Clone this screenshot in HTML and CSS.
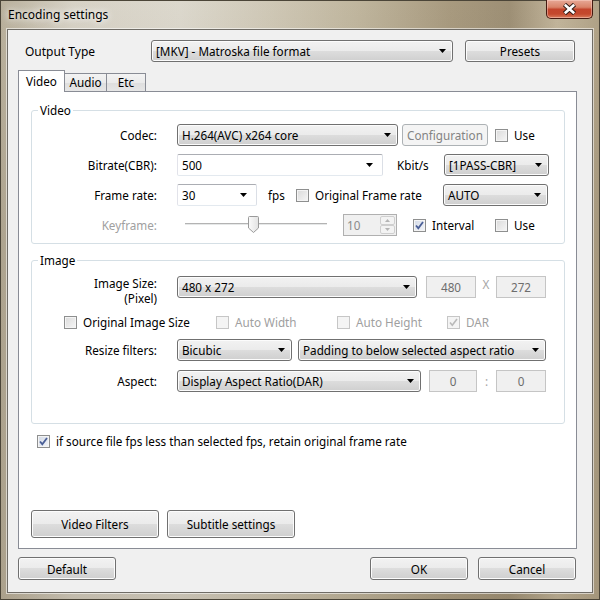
FILE: index.html
```html
<!DOCTYPE html>
<html>
<head>
<meta charset="utf-8">
<title>Encoding settings</title>
<link rel="stylesheet" href="styles.css">
</head>
<body>
<div class="window">
  <div class="titlebar">
    <span class="title">Encoding settings</span>
    <div class="close">
      <svg width="15" height="12" viewBox="0 0 15 12"><path d="M2.5 1.5L12.5 10.5M12.5 1.5L2.5 10.5" stroke="#2e1b16" stroke-width="4.6"/><path d="M2.8 1.8L12.2 10.2M12.2 1.8L2.8 10.2" stroke="#fff" stroke-width="2.6"/></svg>
    </div>
  </div>
  <div class="client">
    <div class="output-row">
      <span class="output-label">Output Type</span>
      <div class="combo w-output"><span>[MKV] - Matroska file format</span><svg class="arr" width="7" height="4"><path d="M0 0h7L3.5 4z"/></svg></div>
      <button class="btn btn-presets">Presets</button>
    </div>

    <div class="tabs">
      <div class="tab active">Video</div>
      <div class="tab t-audio">Audio</div>
      <div class="tab t-etc">Etc</div>
    </div>

    <div class="panel">
      <fieldset class="group">
        <legend>Video</legend>
        <div class="gbody vbody">
          <div class="row">
            <span class="rl">Codec:</span>
            <div class="combo w-codec"><span>H.264(AVC) x264 core</span><svg class="arr" width="7" height="4"><path d="M0 0h7L3.5 4z"/></svg></div>
            <button class="btn disabled btn-config">Configuration</button>
            <span class="cb"><span class="box"></span>Use</span>
          </div>
          <div class="row">
            <span class="rl">Bitrate(CBR):</span>
            <div class="combo edit w-bitrate"><span>500</span><svg class="arr" width="7" height="4"><path d="M0 0h7L3.5 4z"/></svg></div>
            <span class="unit u-kbit">Kbit/s</span>
            <div class="combo w-mode"><span>[1PASS-CBR]</span><svg class="arr" width="7" height="4"><path d="M0 0h7L3.5 4z"/></svg></div>
          </div>
          <div class="row">
            <span class="rl">Frame rate:</span>
            <div class="combo edit w-fps"><span>30</span><svg class="arr" width="7" height="4"><path d="M0 0h7L3.5 4z"/></svg></div>
            <span class="unit u-fps">fps</span>
            <span class="cb w-orig"><span class="box"></span>Original Frame rate</span>
            <div class="combo w-mode"><span>AUTO</span><svg class="arr" width="7" height="4"><path d="M0 0h7L3.5 4z"/></svg></div>
          </div>
          <div class="row">
            <span class="rl dis">Keyframe:</span>
            <div class="slider">
              <svg class="thumb" width="11" height="17" viewBox="0 0 11 17">
                <defs><linearGradient id="tg" x1="0" y1="0" x2="1" y2="0"><stop offset="0" stop-color="#fbfbfb"/><stop offset="1" stop-color="#e2e2e2"/></linearGradient></defs>
                <path d="M0.5 1.5Q0.5 0.5 1.5 0.5h8Q10.5 0.5 10.5 1.5v10.5l-5 4.5l-5-4.5z" fill="url(#tg)" stroke="#9a9a9a"/>
              </svg>
            </div>
            <div class="spin">
              <span class="spin-val">10</span>
              <span class="spin-btns">
                <span class="sb"><svg width="5" height="3"><path d="M0 3h5L2.5 0z" fill="#b4b4b4"/></svg></span>
                <span class="sb"><svg width="5" height="3"><path d="M0 0h5L2.5 3z" fill="#b4b4b4"/></svg></span>
              </span>
            </div>
            <span class="cb w-interval"><span class="box checked"><svg width="11" height="11" viewBox="0 0 11 11"><path d="M2 5.5L4.3 8.2L9 2" fill="none" stroke="#4a5f97" stroke-width="1.8"/></svg></span>Interval</span>
            <span class="cb"><span class="box"></span>Use</span>
          </div>
        </div>
      </fieldset>

      <fieldset class="group g-image">
        <legend>Image</legend>
        <div class="gbody ibody">
          <div class="row r-size">
            <span class="rl two"><span class="ln">Image Size:</span><span class="ln">(Pixel)</span></span>
            <div class="combo w-size"><span>480 x 272</span><svg class="arr" width="7" height="4"><path d="M0 0h7L3.5 4z"/></svg></div>
            <div class="tb tb-w">480</div>
            <span class="sep">X</span>
            <div class="tb">272</div>
          </div>
          <div class="row r-checks">
            <span class="cb c-orig"><span class="box"></span>Original Image Size</span>
            <span class="cb dis c-aw"><span class="box"></span>Auto Width</span>
            <span class="cb dis c-ah"><span class="box"></span>Auto Height</span>
            <span class="cb dis"><span class="box"><svg width="11" height="11" viewBox="0 0 11 11"><path d="M2 5.5L4.3 8.2L9 2" fill="none" stroke="#b9b9b9" stroke-width="1.6"/></svg></span>DAR</span>
          </div>
          <div class="row r-resize">
            <span class="rl">Resize filters:</span>
            <div class="combo w-filter"><span>Bicubic</span><svg class="arr" width="7" height="4"><path d="M0 0h7L3.5 4z"/></svg></div>
            <div class="combo w-pad"><span>Padding to below selected aspect ratio</span><svg class="arr" width="7" height="4"><path d="M0 0h7L3.5 4z"/></svg></div>
          </div>
          <div class="row r-aspect">
            <span class="rl">Aspect:</span>
            <div class="combo w-aspect"><span>Display Aspect Ratio(DAR)</span><svg class="arr" width="7" height="4"><path d="M0 0h7L3.5 4z"/></svg></div>
            <div class="tb tb-a">0</div>
            <span class="sep s-colon">:</span>
            <div class="tb">0</div>
          </div>
        </div>
      </fieldset>

      <div class="row r-retain">
        <span class="cb"><span class="box checked"><svg width="11" height="11" viewBox="0 0 11 11"><path d="M2 5.5L4.3 8.2L9 2" fill="none" stroke="#4a5f97" stroke-width="1.8"/></svg></span>if source file fps less than selected fps, retain original frame rate</span>
      </div>

      <div class="row r-panelbtns">
        <button class="btn btn-wide">Video Filters</button>
        <button class="btn btn-wide">Subtitle settings</button>
      </div>
    </div>

    <div class="footer">
      <button class="btn btn-foot">Default</button>
      <button class="btn btn-foot btn-ok">OK</button>
      <button class="btn btn-foot btn-cancel">Cancel</button>
    </div>
  </div>
</div>
</body>
</html>
```
FILE: styles.css
```css
* { box-sizing: border-box; }
html, body { margin: 0; padding: 0; }
body {
  width: 600px; height: 600px; overflow: hidden;
  font-family: "Noto Sans", "Segoe UI", sans-serif;
  font-size: 11.7px; color: #000;
}
.window {
  width: 600px; height: 600px;
  border: 1px solid #4b4538;
  display: flex; flex-direction: column;
  background:
    linear-gradient(180deg, rgba(255,255,255,0) 0%, rgba(120,105,80,0.18) 40%, rgba(120,105,80,0.22) 100%),
    linear-gradient(90deg, #b9b09c 0%, #d7d2c6 12%, #dcd8cd 30%, #cfc8b6 45%, #bfb59d 60%, #a89a7f 75%, #9d8f75 85%, #c2b59b 93%, #b0a287 100%);
}
.titlebar {
  height: 28px; flex: none;
  display: flex; justify-content: space-between; align-items: flex-start;
  padding-left: 7px; padding-right: 6px;
}
.title {
  margin-top: 6px; line-height: 16px; font-size: 12px;
  text-shadow: 0 0 6px #fff, 0 0 10px rgba(255,255,255,.9);
}
.close {
  width: 47px; height: 19px;
  margin-top: -1px;
  border: 1px solid #451a10; border-top: none;
  border-radius: 0 0 5px 5px;
  background: linear-gradient(180deg, #e7a896 0%, #d98369 40%, #c3452c 52%, #c4482d 78%, #d97d5c 100%);
  box-shadow: inset 0 0 0 1px rgba(255,220,210,.45);
  display: flex; align-items: center; justify-content: center;
}
.client {
  margin-left: 6px;
  width: 586px; height: 564px; flex: none;
  border: 1px solid #6f6c66;
  background: #f0f0f0;
  box-shadow: 0 0 0 1px rgba(255,255,255,.55);
  display: flex; flex-direction: column;
}

/* generic controls */
.btn {
  font: inherit; color: #000;
  height: 22px; padding: 0;
  border: 1px solid #707070; border-radius: 3px;
  background: linear-gradient(180deg, #f2f2f2 0%, #ebebeb 49%, #dddddd 50%, #cfcfcf 100%);
  box-shadow: inset 0 0 0 1px #fcfcfc;
}
.btn.disabled {
  border-color: #adb2b5; color: #838383;
  background: #f4f4f4; box-shadow: none;
}
.combo {
  height: 22px; flex: none;
  display: flex; align-items: center; justify-content: space-between;
  padding: 0 6px 0 4px;
  border: 1px solid #707070; border-radius: 3px;
  background: linear-gradient(180deg, #f2f2f2 0%, #ebebeb 49%, #dddddd 50%, #cfcfcf 100%);
  box-shadow: inset 0 0 0 1px #fcfcfc;
  white-space: nowrap;
}
.combo.edit {
  background: #fff; box-shadow: none; border-radius: 2px;
  border-color: #abadb3 #dbdfe6 #e3e9ef #e2e3ea;
  padding-right: 9px;
}
.arr { flex: none; }
.arr path { fill: #000; }
.row { display: flex; align-items: center; height: 22px; flex: none; }
.rl { width: 125px; margin-right: 20px; text-align: right; flex: none; }
.dis { color: #a0a0a0; }
.cb { display: inline-flex; align-items: center; flex: none; white-space: nowrap; }
.box {
  width: 13px; height: 13px; margin-right: 6px; flex: none;
  border: 1px solid #8e8f8f;
  background: linear-gradient(135deg, #dadada 0%, #f6f6f6 100%);
  box-shadow: inset 0 0 0 1px #f4f4f4;
  display: flex; align-items: center; justify-content: center;
}
.box.checked { background: linear-gradient(135deg, #d3dae6 0%, #f3f5f9 100%); }
.cb.dis .box { border-color: #c6c6c6; background: #f4f4f4; box-shadow: none; }
.tb {
  width: 50px; height: 22px; flex: none;
  border: 1px solid #c5c5c5; background: #f0f0f0; color: #6d6d6d;
  display: flex; align-items: center; justify-content: center;
}
.sep { width: 20px; text-align: center; color: #a6a6a6; flex: none; }

/* output row */
.output-row { display: flex; align-items: center; height: 22px; margin-top: 10px; padding-left: 17px; }
.output-label { width: 126px; flex: none; font-size: 12px; }
.w-output { width: 302px; }
.btn-presets { margin-left: 12px; width: 110px; }

/* tabs */
.tabs {
  display: flex; align-items: flex-end;
  height: 21px; margin-top: 8px; margin-left: 10px;
  position: relative; z-index: 1;
}
.tab {
  height: 18px; line-height: 17px; text-align: center;
  border: 1px solid #898c95; border-left: none; border-bottom: none;
  background: linear-gradient(180deg, #f3f3f3 0%, #ebebeb 50%, #dedede 51%, #e6e6e6 100%);
}
.tab.active {
  width: 47px; height: 22px; line-height: 20px; margin-bottom: -1px;
  border-left: 1px solid #898c95; background: #fff;
}
.t-audio { width: 42px; }
.t-etc { width: 39px; }

/* panel */
.panel {
  margin-left: 10px;
  width: 559px; height: 458px; flex: none;
  border: 1px solid #898c95; background: #fff;
  padding: 10px 11px 10px 12px;
  display: flex; flex-direction: column;
}
.group {
  margin: 0; padding: 0;
  width: 534px;
  border: 1px solid #d5dfe5; border-radius: 3px;
}
.group legend { padding: 0 2px; margin-left: 6px; line-height: 16px; }
.g-image { margin-top: 8px; }
.vbody { display: flex; flex-direction: column; gap: 8px; padding: 6px 0 7px 0; }

.w-codec { width: 221px; }
.btn-config { width: 86px; margin-left: 4px; }
.btn-config + .cb { margin-left: 7px; }
.w-bitrate { width: 206px; }
.unit { flex: none; }
.u-kbit { width: 47px; margin-left: 14px; }
.w-mode { width: 105px; }
.w-fps { width: 80px; }
.u-fps { width: 28px; margin-left: 11px; }
.w-orig { width: 147px; }
.slider {
  width: 158px; height: 22px; flex: none;
  display: flex; align-items: flex-start;
  background:
    linear-gradient(#b3b3b3, #b3b3b3) 8px 9px / 142px 1px no-repeat,
    linear-gradient(#e6e8e8, #e6e8e8) 8px 10px / 142px 1px no-repeat;
}
.thumb { margin-left: 71px; margin-top: 2px; }
.spin {
  width: 54px; height: 22px; margin-left: 8px; flex: none;
  border: 1px solid #b0b0b0; background: #f0f0f0; color: #8a8a8a;
  display: flex; align-items: center; justify-content: space-between;
  padding: 1px 1px 1px 3px;
}
.spin-btns { display: flex; flex-direction: column; width: 15px; height: 18px; }
.sb {
  flex: 1; border: 1px solid #cfcfcf; border-radius: 2px; background: #f3f3f3;
  display: flex; align-items: center; justify-content: center;
}
.w-interval { margin-left: 16px; width: 82px; }

/* image group */
.ibody { padding: 8px 0 31px 0; }
.r-size { height: 29px; align-items: flex-start; }
.rl.two { display: flex; flex-direction: column; align-items: flex-end; margin-top: 0; }
.rl.two .ln { display: block; height: 14px; line-height: 14px; overflow: visible; }
.rl.two .ln + .ln { margin-top: 1px; }
.w-size { width: 240px; }
.tb-w { margin-left: 9px; }
.r-checks { height: 14px; margin-top: 10px; padding-left: 32px; }
.c-orig { width: 152px; }
.c-aw { width: 121px; }
.c-ah { width: 110px; }
.r-resize { margin-top: 10px; }
.w-filter { width: 115px; }
.w-pad { width: 248px; margin-left: 6px; }
.r-aspect { margin-top: 9px; }
.w-aspect { width: 244px; }
.tb-a { width: 48px; margin-left: 8px; }
.s-colon { width: 19px; }

.r-retain { height: 14px; margin-top: 10px; padding-left: 6px; }
.r-panelbtns { margin-top: auto; height: 28px; }
.btn-wide { width: 128px; height: 28px; }
.btn-wide + .btn-wide { margin-left: 8px; }

/* footer */
.footer { display: flex; align-items: center; height: 23px; margin-top: 8px; padding-left: 10px; padding-right: 16px; }
.btn-foot { width: 98px; height: 23px; }
.btn-ok { margin-left: auto; }
.btn-cancel { margin-left: 10px; }
```
